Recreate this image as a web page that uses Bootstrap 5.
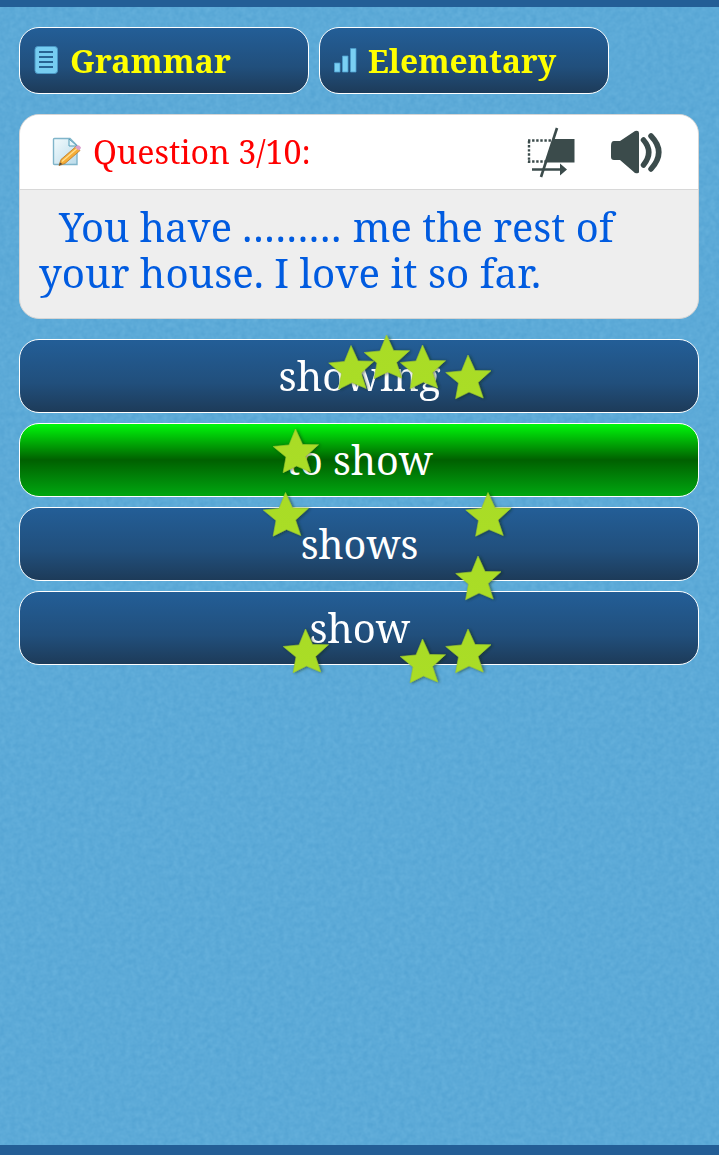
<!DOCTYPE html>
<html lang="en">
<head>
<meta charset="utf-8">
<meta name="viewport" content="width=device-width, initial-scale=1">
<title>Grammar Quiz</title>
<link rel="stylesheet" href="https://cdn.jsdelivr.net/npm/bootstrap@5.3.0/dist/css/bootstrap.min.css">
<style>
body{font-family:"Noto Serif","Droid Serif","DejaVu Serif Condensed","DejaVu Serif",serif;background:#5caad8;height:1155px;overflow:hidden}
.screen{height:1155px;border-top:7px solid #235e96;border-bottom:10px solid #235e96;padding:20px 20px 0 19px;isolation:isolate}
.grain{inset:0;z-index:-1;width:719px;height:1138px}
.blue-panel{background:linear-gradient(#235e97,#214f7c 60%,#1d3b59);border:1px solid #fff;border-radius:20px;color:#fff}
.tab-pill{width:290px;height:67px;padding:0 0 0 14px;color:#ff0;font-weight:700;font-size:32px;line-height:1}
.question{border:1px solid #d5d5d5;border-radius:20px;margin-top:20px;height:205px;background:#eee;overflow:hidden}
.question-head{height:75px;border-bottom:1px solid #d8d8d8;color:red;font-size:32px;background:#fff;padding:0 36px 0 32px}
.question-text{color:#005be0;font-size:39.5px;line-height:46px;padding:14px 19px}
.first-line{padding-left:20px}
.gap-dots{letter-spacing:1.15px}
.answer{height:74px;font-size:39.5px;line-height:1;padding:1px 0 0 1px}
.right-answer{background:linear-gradient(#00f80b,#006000 50%,#00a710)}
.stars{left:0;top:0;pointer-events:none}
.fit{display:inline-block;white-space:nowrap;transform-origin:left}
.answer .fit{transform-origin:center}
</style>
</head>
<body>
<main class="screen position-relative">
<svg class="grain position-absolute" aria-hidden="true"><filter id="paper" x="0" y="0" width="100%" height="100%" color-interpolation-filters="sRGB"><feTurbulence type="fractalNoise" baseFrequency=".19" numOctaves="2" seed="4"/><feColorMatrix values="0.07 0.03 0 0 .312  0.055 0.02 0 0 .629  0.04 0.01 0 0 .820  0 0 0 0 1"/></filter><rect width="719" height="1138" filter="url(#paper)"/></svg>
<nav class="d-flex" style="gap:10px">
<div class="blue-panel tab-pill d-flex align-items-center">
<svg class="flex-shrink-0" width="26" height="30" viewBox="0 0 26 30"><rect x="1" y=".5" width="22.500" height="27" rx="3" fill="#76cdf1" stroke="#4b98c6"/><path d="M5 6h14M5 11h14M5 16h14M5 21h14" stroke="#286493" stroke-width="2"/></svg>
<span class="fit" data-w="161" style="margin-left:10px">Grammar</span></div>
<div class="blue-panel tab-pill d-flex align-items-center">
<svg class="flex-shrink-0" width="25" height="28" viewBox="0 0 25 28"><path d="M.5 16h5.500v9H.5zM8.500 9h5.500v16H8.500zM16.500 1.500h5.500v23.500h-5.500z" fill="#7acff3" stroke="#4d9dcc" stroke-width=".8"/></svg>
<span class="fit" data-w="188" style="margin-left:9px">Elementary</span></div>
</nav>
<section class="question">
<header class="question-head d-flex align-items-center">
<svg width="31" height="32" viewBox="0 0 31 32"><defs><linearGradient id="sheet" x2="1" y2="1"><stop stop-color="#f3fbfd"/><stop offset="1" stop-color="#badbea"/></linearGradient></defs><g transform="translate(0 .5)"><path d="M1.500 3q0-1 1-1H18l7 7v19H2.500q-1 0-1-1z" fill="url(#sheet)" stroke="#80b5ca" stroke-width="1.400"/><path d="M17 2.500v7h8z" fill="#e8f6fa" stroke="#559db8"/><path d="M7 29l2-6L24 10l4 4-15 13z" fill="#f5ad38" stroke="#b7792a" stroke-width=".8"/><path d="M10 25L25 12" stroke="#ffe092" stroke-width="1.300"/><path d="M23 11l2-2q2-1 4 2 0 1-2 3z" fill="#dba0cc"/><path d="M7 29l1-3 2.500 1.500z" fill="#554838"/></g></svg>
<span class="fit" data-w="218" style="margin-left:9.500px">Question 3/10:</span>
<svg class="ms-auto" width="49" height="52" viewBox="0 -1 49 52"><g fill="none" stroke="#3b4b4b"><path d="M1 13.500h25M2 14v22M1 34.500h18" stroke-width="2.400" stroke-dasharray="2.400 1.700"/><path d="M5 42.500h30" stroke-width="2.500"/><path d="M30 1L14 50" stroke-width="2.600"/></g><path d="M27 12h20.500v23.500H19z M33 36.500l7 6-7 6z" fill="#3b4b4b"/></svg>
<svg style="margin-left:35px" width="51" height="46" viewBox="0 -1 51 46"><path d="M0 16q0-5 3-5h6L24 1q4-1 4 2v39q0 2-4 1L9 30H3q-3 0-3-3z" fill="#3b4b4b"/><path d="M32.500 10q10.500 12 0 25M40 6q15.500 16 0 33" fill="none" stroke="#3b4b4b" stroke-width="5.500" stroke-linecap="round"/></svg>
</header>
<div class="question-text"><div class="first-line"><span class="fit" data-w="554">You have <span class="gap-dots">.........</span> me the rest of</span></div><div><span class="fit" data-w="502">your house. I love it so far.</span></div></div>
</section>
<div class="d-grid" style="gap:10px;margin-top:20px">
<button class="blue-panel answer"><span class="fit" data-w="162">showing</span></button>
<button class="blue-panel answer right-answer"><span class="fit" data-w="147">to show</span></button>
<button class="blue-panel answer"><span class="fit" data-w="118">shows</span></button>
<button class="blue-panel answer"><span class="fit" data-w="101">show</span></button>
</div>
</main>
<svg class="stars position-absolute" width="719" height="1155" aria-hidden="true"><defs><linearGradient id="sg" x2="0" y2="1"><stop stop-color="#a9dc26"/><stop offset="1" stop-color="#aadd28"/></linearGradient><filter id="shade" x="-20%" y="-20%" width="150%" height="150%"><feDropShadow dx="1.500" dy=".5" stdDeviation="1.500" flood-color="#172c16" flood-opacity=".6"/></filter><path id="star" d="M0 0L7 15.500 23 15.700 10 27.500 15.200 43 1 37-12.400 43.700-9.500 28-22.300 17.500-6.500 16z" fill="url(#sg)" stroke="#9ac72b" stroke-width=".6" filter="url(#shade)"/></defs>
<use href="#star" x="351" y="345.500"/><use href="#star" x="422.500" y="345"/><use href="#star" x="386.500" y="335"/><use href="#star" x="468" y="355"/><use href="#star" x="295.500" y="429"/><use href="#star" x="285.500" y="492.500"/><use href="#star" x="488" y="492.500"/><use href="#star" x="478" y="556"/><use href="#star" x="305.500" y="629"/><use href="#star" x="422.500" y="639"/><use href="#star" x="468" y="629"/></svg>
<script src="https://cdn.jsdelivr.net/npm/bootstrap@5.3.0/dist/js/bootstrap.bundle.min.js"></script>
<script>
// Stretch each label so that it fills its measure.
document.querySelectorAll('.fit').forEach(e=>{e.style.transform='scaleX('+(+e.dataset.w/e.offsetWidth)+')'});
</script>
</body>
</html>
